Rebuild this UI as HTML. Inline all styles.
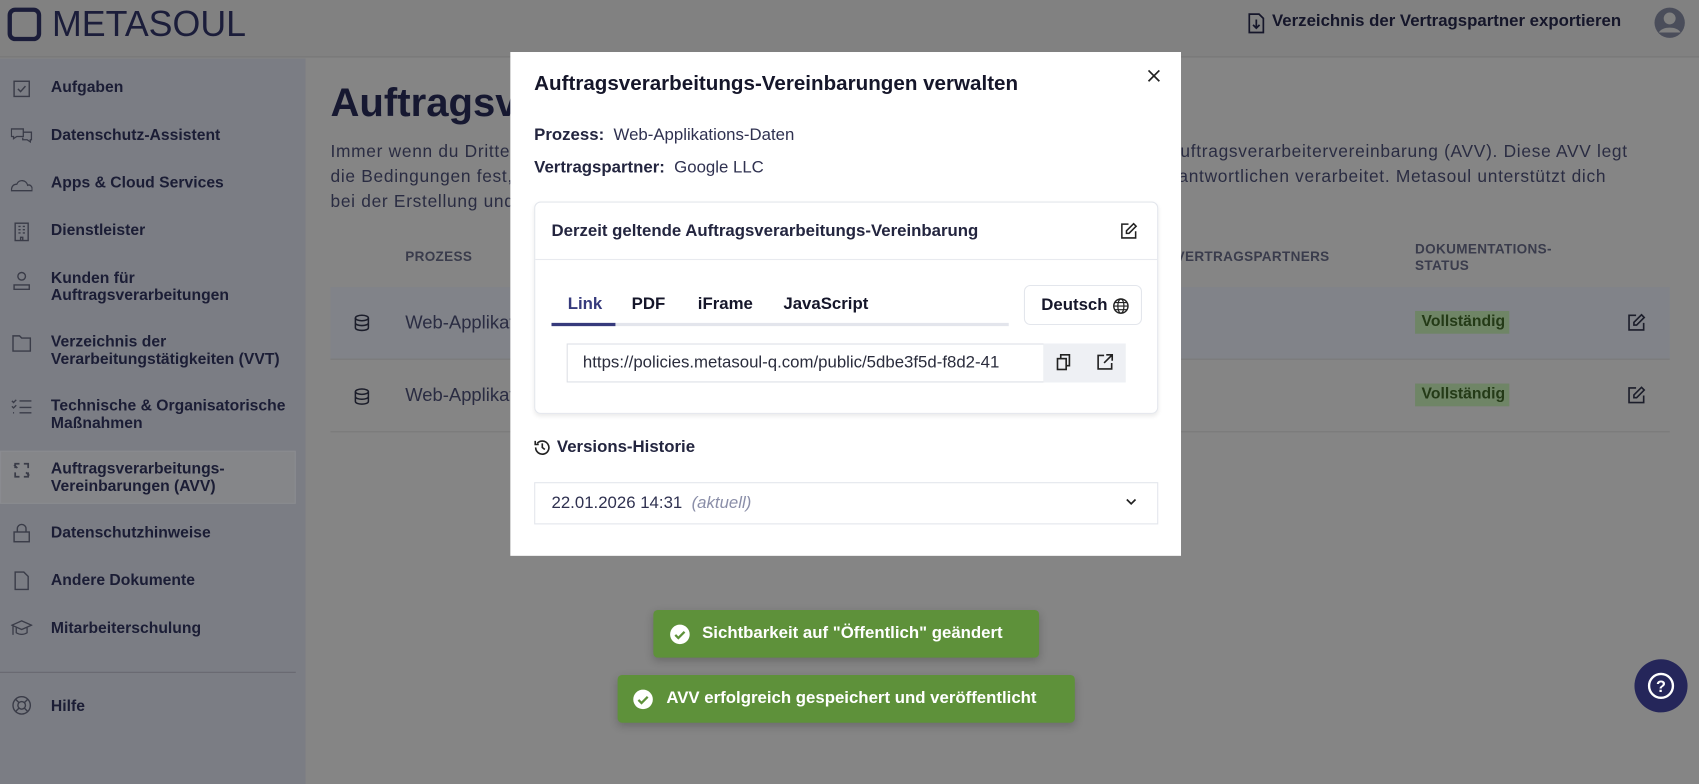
<!DOCTYPE html>
<html><head><meta charset="utf-8"><style>
*{box-sizing:border-box;margin:0;padding:0}
body{width:1699px;height:724px;overflow:hidden;background:#858585;font-family:"Liberation Sans",sans-serif;color:#1b1d35;position:relative}
#w{position:absolute;left:0;top:0;width:1568px;height:669px;transform:scale(1.0835);transform-origin:0 0}
.hdr{position:absolute;left:0;top:0;width:1568px;height:53px;background:#818181;border-bottom:1px solid #767676}
.logo{position:absolute;left:7px;top:7px;width:31px;height:31px;border:4px solid #1b1d3a;border-radius:7px}
.logotxt{position:absolute;left:48px;top:3px;font-size:33px;color:#1b1d3a}
.exp{position:absolute;top:11px;font-size:15.5px;font-weight:bold;color:#15162a}
.side{position:absolute;left:0;top:54px;width:282px;height:670px;background:#7b7d84}
.it{position:absolute;left:47px;font-size:14.5px;font-weight:bold;line-height:16px;color:#1b1d35}
.ic{position:absolute;left:10px;width:20px;height:20px}
.act{position:absolute;left:0;top:362px;width:273px;height:49px;background:#858689;border:1px solid #8a8b90}
.para{position:absolute;left:305px;top:129px;font-size:16px;line-height:23px;color:#2a2c42;white-space:nowrap;letter-spacing:0.65px}
.th{position:absolute;font-size:12.5px;font-weight:bold;color:#3a3c4c;letter-spacing:.3px}
.row{position:absolute;left:305px;width:1236px;height:67px;border-bottom:1px solid #7a7a7a}
.badge{position:absolute;left:1306px;width:87px;height:21px;background:#6f8566;color:#243a17;font-size:14.5px;font-weight:bold;padding:2px 6px}
.modal{position:absolute;left:471px;top:48px;width:619px;height:465px;background:#fff}
.card{position:absolute;left:22px;top:138px;width:576px;height:196px;border:1px solid #e3e6ec;border-radius:6px;box-shadow:0 2px 4px rgba(0,0,0,.08)}
.toast{position:absolute;height:44px;background:#5e913a;border-radius:4px;color:#fff;font-size:15.5px;font-weight:bold;box-shadow:0 3px 8px rgba(0,0,0,.2)}
.toast svg{position:absolute;top:13px}
.toast span{position:absolute;top:13px}
</style></head><body><div id="w">
<div class="hdr">
<div class="logo"></div><div class="logotxt">METASOUL</div>
<svg style="position:absolute;left:1152px;top:12px" width="15" height="19" viewBox="0 0 15 19"><path d="M1 1h9l4 4v13H1z" fill="none" stroke="#15162a" stroke-width="1.6"/><path d="M7.5 6v8M4.5 11l3 3 3-3" fill="none" stroke="#15162a" stroke-width="1.6"/></svg>
<div class="exp" style="left:1174px">Verzeichnis der Vertragspartner exportieren</div>
<svg style="position:absolute;left:1526px;top:6px" width="30" height="30" viewBox="0 0 30 30"><circle cx="15" cy="15" r="14" fill="#4a4d5a"/><circle cx="15" cy="11" r="5.5" fill="#808080"/><path d="M5 24c3-6 17-6 20 0" fill="#808080"/></svg>
</div>
<div class="side">
<div class="act"></div>
</div>
<svg class="ic" style="top:72px" viewBox="0 0 20 20"><rect x="3" y="3" width="14" height="14" fill="none" stroke="#3a3c48" stroke-width="1.3"/><path d="M6.5 10l2.5 2.5 4.5-5" fill="none" stroke="#3a3c48" stroke-width="1.3"/></svg>
<div class="it" style="top:73px">Aufgaben</div>
<svg class="ic" style="top:116px" viewBox="0 0 20 20"><path d="M0.5 3h11v7h-6l-3 2v-2h-2z M12 6h7v7h-1v2l-3-2h-4v-2" fill="none" stroke="#3a3c48" stroke-width="1.2"/></svg>
<div class="it" style="top:117px">Datenschutz-Assistent</div>
<svg class="ic" style="top:160px" viewBox="0 0 20 20"><path d="M0.5 16h19c1-4-2-6-4-5-1-5-8-6-10-1-3 0-5 2-5 6z" fill="none" stroke="#3a3c48" stroke-width="1.2"/></svg>
<div class="it" style="top:161px">Apps &amp; Cloud Services</div>
<svg class="ic" style="top:204px" viewBox="0 0 20 20"><rect x="4" y="2" width="12" height="16" fill="none" stroke="#3a3c48" stroke-width="1.3"/><path d="M7 5h2M11 5h2M7 8h2M11 8h2M7 11h2M11 11h2M9 18v-3h2v3" stroke="#3a3c48" stroke-width="1.3" fill="none"/></svg>
<div class="it" style="top:205px">Dienstleister</div>
<svg class="ic" style="top:249px" viewBox="0 0 20 20"><circle cx="10" cy="6" r="3.5" fill="none" stroke="#3a3c48" stroke-width="1.3"/><path d="M3 18v-4h14v4z" fill="none" stroke="#3a3c48" stroke-width="1.3"/></svg>
<div class="it" style="top:249px">Kunden für<br>Auftragsverarbeitungen</div>
<svg class="ic" style="top:307px" viewBox="0 0 20 20"><path d="M2 3h6l2 2h8v12H2z" fill="none" stroke="#3a3c48" stroke-width="1.3"/></svg>
<div class="it" style="top:308px">Verzeichnis der<br>Verarbeitungstätigkeiten (VVT)</div>
<svg class="ic" style="top:366px" viewBox="0 0 20 20"><path d="M1 4l1.5 1.5L5 3M1 9l1.5 1.5L5 8M2 15h1M8 4h11M8 10h11M8 15h11" fill="none" stroke="#3a3c48" stroke-width="1.3"/></svg>
<div class="it" style="top:367px">Technische &amp; Organisatorische<br>Maßnahmen</div>
<svg class="ic" style="top:424px" viewBox="0 0 20 20"><path d="M4 8V4h4M16 12v4h-4M12 4h4v4M8 16H4v-4M3 5l3 3M17 15l-3-3" fill="none" stroke="#3a3c48" stroke-width="1.6"/></svg>
<div class="it" style="top:425px">Auftragsverarbeitungs-<br>Vereinbarungen (AVV)</div>
<svg class="ic" style="top:482px" viewBox="0 0 20 20"><rect x="3" y="9" width="14" height="9" fill="none" stroke="#3a3c48" stroke-width="1.3"/><path d="M6 9V6a4 4 0 0 1 8 0v3" fill="none" stroke="#3a3c48" stroke-width="1.3"/></svg>
<div class="it" style="top:484px">Datenschutzhinweise</div>
<svg class="ic" style="top:526px" viewBox="0 0 20 20"><path d="M4 2h8l4 4v12H4z" fill="none" stroke="#3a3c48" stroke-width="1.3"/></svg>
<div class="it" style="top:528px">Andere Dokumente</div>
<svg class="ic" style="top:570px" viewBox="0 0 20 20"><path d="M1 7l9-4 9 4-9 4zM5 9v5c3 2 7 2 10 0V9M2 8v8" fill="none" stroke="#3a3c48" stroke-width="1.2"/></svg>
<div class="it" style="top:572px">Mitarbeiterschulung</div>
<div style="position:absolute;left:0;top:620px;width:273px;height:1px;background:#676870"></div>
<svg class="ic" style="top:641px" viewBox="0 0 20 20"><circle cx="10" cy="10" r="8" fill="none" stroke="#3a3c48" stroke-width="1.3"/><circle cx="10" cy="10" r="3.5" fill="none" stroke="#3a3c48" stroke-width="1.3"/><path d="M4.5 4.5l3 3M15.5 4.5l-3 3M4.5 15.5l3-3M15.5 15.5l-3-3" stroke="#3a3c48" stroke-width="1.3"/></svg>
<div class="it" style="top:644px">Hilfe</div>

<div style="position:absolute;left:305px;top:74px;font-size:37px;font-weight:bold;color:#161831">Auftragsverarbeitungs-Vereinbarungen</div>
<div class="para">Immer wenn du Dritte in deine Verarbeitung personenbezogener Daten einbindest, brauchst du eine Auftragsverarbeitervereinbarung (AVV). Diese AVV legt<br>die Bedingungen fest, unter denen der Dienstleister die Daten im Auftrag des für die Verarbeitung Verantwortlichen verarbeitet. Metasoul unterstützt dich<br>bei der Erstellung und Verwaltung dieser Vereinbarungen.</div>
<div class="th" style="left:374px;top:230px">PROZESS</div>
<div class="th" style="left:1085px;top:230px">VERTRAGSPARTNERS</div>
<div class="th" style="left:1306px;top:223px;line-height:15px">DOKUMENTATIONS-<br>STATUS</div>
<div class="row" style="top:265px;background:#818389"></div>
<div class="row" style="top:332px"></div>
<svg style="position:absolute;left:327px;top:290px" width="14" height="16" viewBox="0 0 14 16"><ellipse cx="7" cy="3.5" rx="6" ry="2.5" fill="none" stroke="#1b1d2a" stroke-width="1.4"/><path d="M1 3.5v9c0 3.3 12 3.3 12 0v-9M1 8c0 3.3 12 3.3 12 0" fill="none" stroke="#1b1d2a" stroke-width="1.4"/></svg>
<svg style="position:absolute;left:327px;top:358px" width="14" height="16" viewBox="0 0 14 16"><ellipse cx="7" cy="3.5" rx="6" ry="2.5" fill="none" stroke="#1b1d2a" stroke-width="1.4"/><path d="M1 3.5v9c0 3.3 12 3.3 12 0v-9M1 8c0 3.3 12 3.3 12 0" fill="none" stroke="#1b1d2a" stroke-width="1.4"/></svg>
<div style="position:absolute;left:374px;top:288px;font-size:17px;color:#2a2c42">Web-Applikations-Daten</div>
<div style="position:absolute;left:374px;top:355px;font-size:17px;color:#2a2c42">Web-Applikations-Daten</div>
<div class="badge" style="top:287px">Vollständig</div>
<div class="badge" style="top:354px">Vollständig</div>
<svg style="position:absolute;left:1502px;top:289px" width="17" height="17" viewBox="0 0 17 17"><path d="M8 2H1.5v13.5H15V9" fill="none" stroke="#1b1d2a" stroke-width="1.5"/><path d="M13 1.5l2.5 2.5-7 7H6V8.5z" fill="none" stroke="#1b1d2a" stroke-width="1.5"/></svg>
<svg style="position:absolute;left:1502px;top:356px" width="17" height="17" viewBox="0 0 17 17"><path d="M8 2H1.5v13.5H15V9" fill="none" stroke="#1b1d2a" stroke-width="1.5"/><path d="M13 1.5l2.5 2.5-7 7H6V8.5z" fill="none" stroke="#1b1d2a" stroke-width="1.5"/></svg>

<div class="modal">
<div style="position:absolute;left:22px;top:19px;font-size:19px;font-weight:bold;color:#15162a">Auftragsverarbeitungs-Vereinbarungen verwalten</div>
<svg style="position:absolute;left:587px;top:15px" width="14" height="14" viewBox="0 0 14 14"><path d="M2 2l10 10M12 2L2 12" stroke="#222" stroke-width="1.6"/></svg>
<div style="position:absolute;left:22px;top:68px;font-size:15.5px;color:#2f3150"><b style="color:#23253f">Prozess:</b>&nbsp; Web-Applikations-Daten</div>
<div style="position:absolute;left:22px;top:98px;font-size:15.5px;color:#2f3150"><b style="color:#23253f">Vertragspartner:</b>&nbsp; Google LLC</div>
<div class="card">
<div style="position:absolute;left:15px;top:18px;font-size:15.5px;font-weight:bold;color:#23253f">Derzeit geltende Auftragsverarbeitungs-Vereinbarung</div>
<svg style="position:absolute;left:540px;top:18px" width="16" height="16" viewBox="0 0 17 17"><path d="M8 2H1.5v13.5H15V9" fill="none" stroke="#222" stroke-width="1.5"/><path d="M13 1.5l2.5 2.5-7 7H6V8.5z" fill="none" stroke="#222" stroke-width="1.5"/></svg>
<div style="position:absolute;left:0;top:52px;width:574px;height:1px;background:#e8eaef"></div>
<div style="position:absolute;left:15px;top:111px;width:422px;height:3px;background:#e3e5ec"></div>
<div style="position:absolute;left:15px;top:111px;width:59px;height:3px;background:#363a7c"></div>
<div style="position:absolute;left:30px;top:85px;font-size:15.5px;font-weight:bold;color:#363a7c">Link</div>
<div style="position:absolute;left:89px;top:85px;font-size:15.5px;font-weight:bold;color:#15162a">PDF</div>
<div style="position:absolute;left:150px;top:85px;font-size:15.5px;font-weight:bold;color:#15162a">iFrame</div>
<div style="position:absolute;left:229px;top:85px;font-size:15.5px;font-weight:bold;color:#15162a">JavaScript</div>
<div style="position:absolute;left:451px;top:76px;width:109px;height:37px;border:1px solid #e3e6ec;border-radius:6px;font-size:15.5px;font-weight:bold;color:#15162a;padding:9px 0 0 15px">Deutsch</div>
<svg style="position:absolute;left:533px;top:88px" width="15" height="15" viewBox="0 0 16 16"><circle cx="8" cy="8" r="7" fill="none" stroke="#222" stroke-width="1.4"/><ellipse cx="8" cy="8" rx="3" ry="7" fill="none" stroke="#222" stroke-width="1.2"/><path d="M1 8h14M2 4.5h12M2 11.5h12" stroke="#222" stroke-width="1.1"/></svg>
<div style="position:absolute;left:29px;top:130px;width:441px;height:36px;border:1px solid #dde0e6;font-size:15.5px;color:#2a2c3c;padding:8px 0 0 14px;overflow:hidden;white-space:nowrap">https://policies.metasoul-q.com/public/5dbe3f5d-f8d2-41</div>
<div style="position:absolute;left:469px;top:130px;width:76px;height:36px;background:#eef0f4"></div>
<svg style="position:absolute;left:481px;top:139px" width="14" height="17" viewBox="0 0 14 17"><rect x="1" y="5" width="8" height="10" fill="none" stroke="#222" stroke-width="1.5"/><path d="M4 5V1.5h8v10H9" fill="none" stroke="#222" stroke-width="1.5"/></svg>
<svg style="position:absolute;left:518px;top:139px" width="16" height="16" viewBox="0 0 16 16"><path d="M7 2H1.5v12.5H14V9M9 1.5h5.5V7M14.5 1.5L7 9" fill="none" stroke="#222" stroke-width="1.5"/></svg>
</div>
<svg style="position:absolute;left:22px;top:357px" width="15" height="15" viewBox="0 0 16 16"><path d="M3 4.5A6.5 6.5 0 1 1 1.5 8.5" fill="none" stroke="#222" stroke-width="1.6"/><path d="M1 2v3.5h3.5" fill="none" stroke="#222" stroke-width="1.6"/><path d="M8 4.5V8.5l2.5 2" fill="none" stroke="#222" stroke-width="1.6"/></svg>
<div style="position:absolute;left:43px;top:356px;font-size:15.5px;font-weight:bold;color:#23253f">Versions-Historie</div>
<div style="position:absolute;left:22px;top:397px;width:576px;height:39px;border:1px solid #e3e6ec;font-size:15.5px;color:#2f3150;padding:10px 0 0 15px">22.01.2026 14:31 &nbsp;<i style="color:#8a8ea8">(aktuell)</i></div>
<svg style="position:absolute;left:567px;top:411px" width="12" height="8" viewBox="0 0 12 8"><path d="M2 2l4 4 4-4" fill="none" stroke="#222" stroke-width="1.6"/></svg>
</div>

<div class="toast" style="left:603px;top:563px;width:356px">
<svg style="left:15px" width="19" height="19" viewBox="0 0 20 20"><circle cx="10" cy="10" r="9.5" fill="#fff"/><path d="M5.5 10.5l3 3 6-6" fill="none" stroke="#5e913a" stroke-width="2.2"/></svg>
<span style="left:45px">Sichtbarkeit auf "Öffentlich" geändert</span></div>
<div class="toast" style="left:570px;top:623px;width:422px">
<svg style="left:14px" width="19" height="19" viewBox="0 0 20 20"><circle cx="10" cy="10" r="9.5" fill="#fff"/><path d="M5.5 10.5l3 3 6-6" fill="none" stroke="#5e913a" stroke-width="2.2"/></svg>
<span style="left:45px">AVV erfolgreich gespeichert und veröffentlicht</span></div>

<svg style="position:absolute;left:1508px;top:608px" width="50" height="50" viewBox="0 0 50 50"><circle cx="25" cy="25" r="24.5" fill="#25265a"/><circle cx="25" cy="25" r="11" fill="none" stroke="#fff" stroke-width="2.2"/><text x="25" y="30.5" text-anchor="middle" font-family="Liberation Sans" font-weight="bold" font-size="15" fill="#fff">?</text></svg>
</div></body></html>
